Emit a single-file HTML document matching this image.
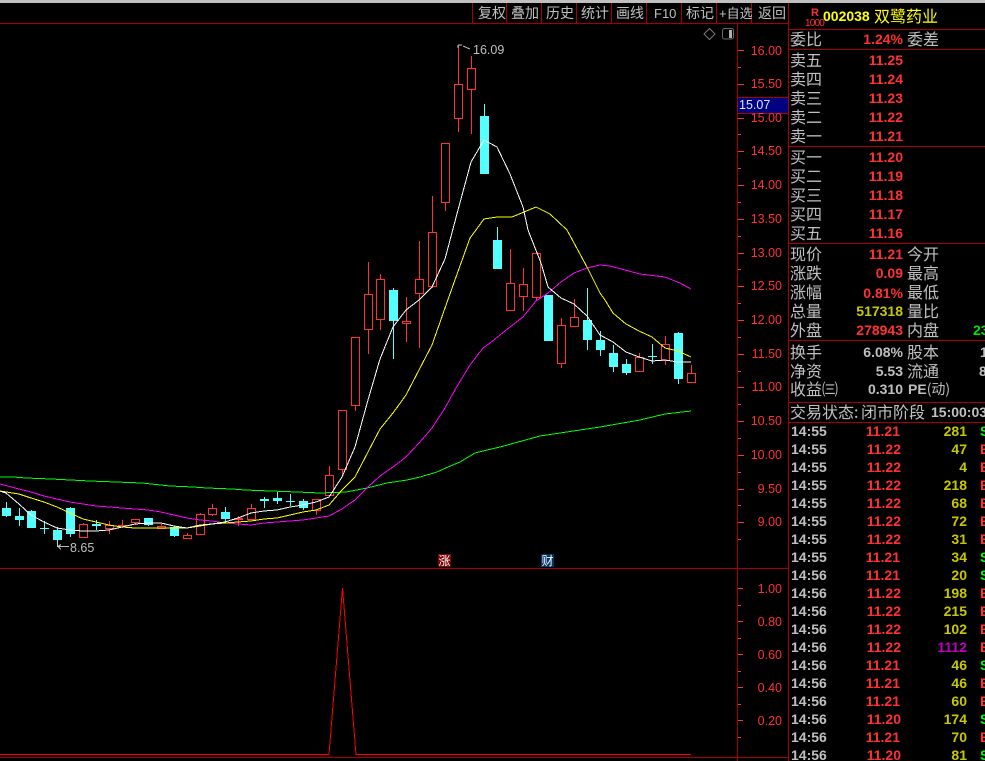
<!DOCTYPE html>
<html><head><meta charset="utf-8"><style>
html,body{margin:0;padding:0;background:#000;width:985px;height:761px;overflow:hidden}
svg{display:block}
text{font-family:"Liberation Sans","WenQuanYi Zen Hei",sans-serif;white-space:pre}
.c{font-size:16px;fill:#c0c0c0;font-family:"WenQuanYi Zen Hei","Noto Sans CJK SC",sans-serif}
.t{font-size:14px;fill:#c0c0c0;font-family:"WenQuanYi Zen Hei","Noto Sans CJK SC",sans-serif}
.b{font-size:14px;font-weight:bold;fill:#ff3232;text-anchor:end}
.y{fill:#c8c800}.g{fill:#c0c0c0}.n{fill:#00e600}
.a{font-size:12.5px;fill:#ff3232;text-anchor:end}
.l{font-size:12.5px;fill:#c0c0c0}
.tm{font-size:14px;font-weight:bold;fill:#c0c0c0}
.p{font-size:14px;font-weight:bold;fill:#ff3232;text-anchor:end}
.v{font-size:14px;font-weight:bold;fill:#c8c800;text-anchor:end}
.s{font-size:14px;font-weight:bold}
</style></head><body>
<svg width="985" height="761" viewBox="0 0 985 761" xmlns="http://www.w3.org/2000/svg">
<rect width="985" height="761" fill="#000"/>
<rect width="985" height="3" fill="#c0c0c0"/>
<g shape-rendering="crispEdges">
<path fill="none" stroke="#ff3232" d="M83.500 523V525M109.500 521V534M122.500 520V528M118 525.500h9M135.500 523V525M161.500 524V527M187.500 533V536M200.500 513V515M212.500 504V516M238.500 516V526M251.500 504V509M316.500 511V515M329.500 466V476M342.500 470V475M355.500 406V411M368.500 262V354M380.500 274V330M406.500 297V342M419.500 241V348M432.500 196V288M445.500 203V211M458.500 45V132M471.500 56V134M510.500 249V284M523.500 268V311M536.500 298V301M561.500 318V368M574.500 299V318M639.500 353V358M665.500 336V365M691.500 365V374"/>
<path fill="#000" stroke="#ff3232" d="M79.500 524.500h8v13h-8zM105.500 525.500h8v3h-8zM131.500 519.500h8v3h-8zM157.500 526.500h8v2h-8zM183.500 535.500h8v3h-8zM196.500 514.500h8v20h-8zM208.500 508.500h8v6h-8zM234.500 518.500h8v1h-8zM247.500 508.500h8v11h-8zM312.500 499.500h8v11h-8zM325.500 475.500h8v20h-8zM338.500 410.500h8v59h-8zM351.500 337.500h8v68h-8zM364.500 294.500h8v35h-8zM376.500 279.500h8v40h-8zM402.500 321.500h8v2h-8zM415.500 279.500h8v14h-8zM428.500 232.500h8v54h-8zM441.500 143.500h8v59h-8zM454.500 84.500h8v34h-8zM467.500 68.500h8v21h-8zM506.500 283.500h8v27h-8zM519.500 284.500h8v12h-8zM532.500 253.500h8v44h-8zM557.500 325.500h8v38h-8zM570.500 317.500h8v9h-8zM635.500 357.500h8v14h-8zM661.500 344.500h8v16h-8zM687.500 373.500h8v9h-8z"/>
<path fill="none" stroke="#54ffff" d="M6.500 502V517M19.500 508V526M31.500 510V528M44.500 521V534M57.500 527V547M70.500 507V537M96.500 520V530M148.500 518V526M174.500 526V537M225.500 507V522M264.500 497V508M277.500 492V504M290.500 494V506M303.500 499V510M393.500 288V359M484.500 104V174M497.500 227V269M587.500 288V350M600.500 331V356M613.500 345V372M626.500 359V375M652.500 344V364M678.500 332V384"/>
<path fill="#54ffff" d="M2 508h9v8h-9zM15 516h9v4h-9zM27 511h9v17h-9zM40 528h9v1h-9zM53 530h9v10h-9zM66 508h9v26h-9zM92 524h9v2h-9zM144 518h9v7h-9zM170 527h9v9h-9zM221 512h9v7h-9zM260 499h9v2h-9zM273 498h9v3h-9zM286 501h9v1h-9zM299 501h9v7h-9zM389 290h9v31h-9zM480 116h9v58h-9zM493 240h9v29h-9zM544 295h9v46h-9zM583 320h9v20h-9zM596 340h9v10h-9zM609 353h9v14h-9zM622 364h9v9h-9zM648 356h9v1h-9zM674 333h9v46h-9z"/>
<polyline fill="none" stroke="#00ff00" points="0,477 13,477 26,478 51,479 90,481 116,482 142,483 170,486 193,487 207,488 232,489 245,490 271,491 297,492 320,493 346,492 367,488 387,483 407,480 420,477 437,472 448,467 460,462 475,453 487,450 500,447 540,436 600,427 640,420 665,414 691,411"/>
<polyline fill="none" stroke="#ff00ff" points="0,484 19,489 31,492 44,496 57,499 70,502 83,504 96,506 109,507 122,508 135,509 148,510 161,512 174,515 187,518 200,520 212,521 225,523 238,524 251,525 264,523 277,522 290,521 303,520 316,518 329,516 342,509 349,504 355,500 368,487 380,476 393,467 406,457 419,443 432,428 445,408 456,388 470,365 483,348 490,343 510,327 523,317 536,301 548,293 561,282 574,273 587,268 600,265 610,266 640,274 665,277 680,283 691,289"/>
<polyline fill="none" stroke="#ffff00" points="0,491 19,494 31,498 44,502 57,507 70,513 83,519 96,522 109,525 122,527 135,528 148,528 161,528 174,528 187,528 200,526 212,524 225,523 238,522 251,521 264,519 277,518 290,515 303,512 316,510 329,505 342,490 355,477 368,452 380,429 393,413 406,395 419,370 432,345 445,308 456,277 470,238 476,230 484,219 497,217 512,217 536,207 550,214 567,230 587,267 600,293 605,300 613,313 626,324 639,331 652,337 665,348 678,351 691,357"/>
<polyline fill="none" stroke="#ffffff" points="0,491 6,493 19,504 31,515 44,522 57,528 70,530 83,531 96,531 109,530 122,527 135,524 148,523 161,523 174,526 187,528 200,525 212,524 225,522 238,518 251,513 264,511 277,510 290,507 303,505 316,502 329,497 342,477 355,447 368,400 380,359 393,327 406,310 419,300 432,287 445,259 458,210 471,162 484,140 497,147 510,174 523,207 528,230 541,263 548,287 561,298 574,304 587,316 600,335 613,342 626,352 639,357 652,361 665,360 678,362 691,362"/>
<path fill="none" stroke="#ff0000" d="M0 754.500H329L342.500 588L356 754.500H691"/>
<path fill="none" stroke="#a80000" d="M0 23.500H788M472.500 3V23M506.500 3V23M541.500 3V23M576.500 3V23M611.500 3V23M646.500 3V23M681.500 3V23M716.500 3V23M751.500 3V23M737.500 23V761M788.500 3V761M0 568.500H788M0 757.500H788M788 29.500H985M788 49.500H985M788 146.500H985M788 243.500H985M788 340.500H985M788 402.500H985M788 422.500H985M737 97.500H788M737 113.500H788"/>
<path fill="none" stroke="#ff3232" d="M738 50.500h6M738 67.500h3M738 84.500h6M738 101.500h3M738 118.500h6M738 134.500h3M738 151.500h6M738 168.500h3M738 185.500h6M738 202.500h3M738 219.500h6M738 236.500h3M738 253.500h6M738 269.500h3M738 286.500h6M738 303.500h3M738 320.500h6M738 337.500h3M738 354.500h6M738 371.500h3M738 387.500h6M738 404.500h3M738 421.500h6M738 438.500h3M738 455.500h6M738 472.500h3M738 489.500h6M738 505.500h3M738 522.500h6M738 539.500h3"/>
<path fill="none" stroke="#ff3232" d="M738 588.500h5M738 605.500h3M738 621.500h5M738 638.500h3M738 654.500h5M738 671.500h3M738 687.500h5M738 704.500h3M738 720.500h5M738 737.500h3"/>
<rect x="738" y="98" width="50" height="15" fill="#000080"/>
<rect x="438" y="554" width="13" height="13" fill="#800000"/>
<rect x="541" y="554" width="13" height="13" fill="#003366"/>
<path fill="none" stroke="#c0c0c0" d="M458 45h4M470 49L463 46M458 45v3M58 546.500H69M58 546.500l3-2M58 546.500l3 3"/>
</g>
<path fill="none" stroke="#7a7a7a" d="M709.500 28.500L715 34L709.500 39.500L704 34Z"/>
<rect x="722.500" y="28.500" width="11" height="10.500" rx="2" fill="none" stroke="#6a6a6a"/>
<rect x="729" y="30" width="3" height="8" fill="#b0b0b0"/>

<text class="t" x="478" y="18">复权</text><text class="t" x="511" y="18">叠加</text><text class="t" x="546" y="18">历史</text><text class="t" x="581" y="18">统计</text><text class="t" x="616" y="18">画线</text><text x="654" y="18" style="font-size:13px;fill:#c0c0c0">F10</text><text class="t" x="686" y="18">标记</text><text x="719" y="18" style="font-size:13px;fill:#c0c0c0">+自选</text><text class="t" x="758" y="18">返回</text>

<text class="a" x="782" y="55">16.00</text><text class="a" x="782" y="88">15.50</text><text class="a" x="782" y="122">15.00</text><text class="a" x="782" y="155">14.50</text><text class="a" x="782" y="189">14.00</text><text class="a" x="782" y="223">13.50</text><text class="a" x="782" y="257">13.00</text><text class="a" x="782" y="290">12.50</text><text class="a" x="782" y="324">12.00</text><text class="a" x="782" y="358">11.50</text><text class="a" x="782" y="391">11.00</text><text class="a" x="782" y="425">10.50</text><text class="a" x="782" y="459">10.00</text><text class="a" x="782" y="493">9.50</text><text class="a" x="782" y="526">9.00</text>
<text class="a" x="782" y="593">1.00</text><text class="a" x="782" y="626">0.80</text><text class="a" x="782" y="659">0.60</text><text class="a" x="782" y="692">0.40</text><text class="a" x="782" y="725">0.20</text>
<text x="739" y="109" style="font-size:12.5px;fill:#d8e8ff">15.07</text>
<text class="l" x="473" y="54">16.09</text><text class="l" x="70" y="552">8.65</text>
<text x="438.500" y="565" style="font-size:12px;fill:#fff;font-family:'WenQuanYi Zen Hei','Noto Sans CJK SC',sans-serif">涨</text>
<text x="541.500" y="565" style="font-size:12px;fill:#fff;font-family:'WenQuanYi Zen Hei','Noto Sans CJK SC',sans-serif">财</text>

<text x="811" y="16" style="font-size:11px;font-weight:bold;fill:#ff3232">R</text>
<text x="805" y="26" style="font-size:10px;fill:#ff3232;letter-spacing:-.8px">1000</text>
<text x="823" y="21" style="font-size:14px;font-weight:bold;fill:#ffff00">002038</text>
<text x="874" y="22" style="font-size:16px;fill:#ffff00;font-family:'WenQuanYi Zen Hei','Noto Sans CJK SC',sans-serif">双鹭药业</text>

<text class="c" x="790" y="45">委比</text><text class="b" x="903" y="44">1.24%</text><text class="c" x="907" y="45">委差</text>
<text class="c" x="790" y="66">卖五</text><text class="b" x="903" y="65">11.25</text>
<text class="c" x="790" y="85">卖四</text><text class="b" x="903" y="84">11.24</text>
<text class="c" x="790" y="104">卖三</text><text class="b" x="903" y="103">11.23</text>
<text class="c" x="790" y="123">卖二</text><text class="b" x="903" y="122">11.22</text>
<text class="c" x="790" y="142">卖一</text><text class="b" x="903" y="141">11.21</text>
<text class="c" x="790" y="163">买一</text><text class="b" x="903" y="162">11.20</text>
<text class="c" x="790" y="182">买二</text><text class="b" x="903" y="181">11.19</text>
<text class="c" x="790" y="201">买三</text><text class="b" x="903" y="200">11.18</text>
<text class="c" x="790" y="220">买四</text><text class="b" x="903" y="219">11.17</text>
<text class="c" x="790" y="239">买五</text><text class="b" x="903" y="238">11.16</text>
<text class="c" x="790" y="260">现价</text><text class="b" x="903" y="259">11.21</text><text class="c" x="907" y="260">今开</text>
<text class="c" x="790" y="279">涨跌</text><text class="b" x="903" y="278">0.09</text><text class="c" x="907" y="279">最高</text>
<text class="c" x="790" y="298">涨幅</text><text class="b" x="903" y="298">0.81%</text><text class="c" x="907" y="298">最低</text>
<text class="c" x="790" y="317">总量</text><text class="b y" x="903" y="316">517318</text><text class="c" x="907" y="317">量比</text>
<text class="c" x="790" y="336">外盘</text><text class="b" x="903" y="335">278943</text><text class="c" x="907" y="336">内盘</text><text class="b n" x="973" y="335" style="text-anchor:start">23</text>
<text class="c" x="790" y="358">换手</text><text class="b g" x="903" y="357">6.08%</text><text class="c" x="907" y="358">股本</text><text class="b g" x="980" y="357" style="text-anchor:start">1</text>
<text class="c" x="790" y="377">净资</text><text class="b g" x="903" y="376">5.53</text><text class="c" x="907" y="377">流通</text><text class="b g" x="979" y="376" style="text-anchor:start">8</text>
<text class="c" x="790" y="395">收益㈢</text><text class="b g" x="903" y="394">0.310</text><text class="b g" x="908" y="394" style="text-anchor:start">PE<tspan style="font-weight:normal;font-family:'WenQuanYi Zen Hei','Noto Sans CJK SC',sans-serif">(动)</tspan></text>
<text class="c" x="790" y="418">交易状态:</text><text class="c" x="861" y="418">闭市阶段</text><text class="tm" x="931" y="417">15:00:03</text>

<text class="tm" x="791" y="436">14:55</text><text class="p" x="900" y="436">11.21</text><text class="v" x="967" y="436">281</text><text class="s" x="980" y="436" fill="#00ff00">S</text>
<text class="tm" x="791" y="454">14:55</text><text class="p" x="901" y="454">11.22</text><text class="v" x="967" y="454">47</text><text class="s" x="980" y="454" fill="#ff3232">B</text>
<text class="tm" x="791" y="472">14:55</text><text class="p" x="901" y="472">11.22</text><text class="v" x="967" y="472">4</text><text class="s" x="980" y="472" fill="#ff3232">B</text>
<text class="tm" x="791" y="490">14:55</text><text class="p" x="901" y="490">11.22</text><text class="v" x="967" y="490">218</text><text class="s" x="980" y="490" fill="#ff3232">B</text>
<text class="tm" x="791" y="508">14:55</text><text class="p" x="901" y="508">11.22</text><text class="v" x="967" y="508">68</text><text class="s" x="980" y="508" fill="#ff3232">B</text>
<text class="tm" x="791" y="526">14:55</text><text class="p" x="901" y="526">11.22</text><text class="v" x="967" y="526">72</text><text class="s" x="980" y="526" fill="#ff3232">B</text>
<text class="tm" x="791" y="544">14:55</text><text class="p" x="901" y="544">11.22</text><text class="v" x="967" y="544">31</text><text class="s" x="980" y="544" fill="#ff3232">B</text>
<text class="tm" x="791" y="562">14:55</text><text class="p" x="900" y="562">11.21</text><text class="v" x="967" y="562">34</text><text class="s" x="980" y="562" fill="#00ff00">S</text>
<text class="tm" x="791" y="580">14:56</text><text class="p" x="900" y="580">11.21</text><text class="v" x="967" y="580">20</text><text class="s" x="980" y="580" fill="#00ff00">S</text>
<text class="tm" x="791" y="598">14:56</text><text class="p" x="901" y="598">11.22</text><text class="v" x="967" y="598">198</text><text class="s" x="980" y="598" fill="#ff3232">B</text>
<text class="tm" x="791" y="616">14:56</text><text class="p" x="901" y="616">11.22</text><text class="v" x="967" y="616">215</text><text class="s" x="980" y="616" fill="#ff3232">B</text>
<text class="tm" x="791" y="634">14:56</text><text class="p" x="901" y="634">11.22</text><text class="v" x="967" y="634">102</text><text class="s" x="980" y="634" fill="#ff3232">B</text>
<text class="tm" x="791" y="652">14:56</text><text class="p" x="901" y="652">11.22</text><text class="v" x="967" y="652" style="fill:#c000c0">1112</text><text class="s" x="980" y="652" fill="#ff3232">B</text>
<text class="tm" x="791" y="670">14:56</text><text class="p" x="900" y="670">11.21</text><text class="v" x="967" y="670">46</text><text class="s" x="980" y="670" fill="#00ff00">S</text>
<text class="tm" x="791" y="688">14:56</text><text class="p" x="900" y="688">11.21</text><text class="v" x="967" y="688">46</text><text class="s" x="980" y="688" fill="#ff3232">B</text>
<text class="tm" x="791" y="706">14:56</text><text class="p" x="900" y="706">11.21</text><text class="v" x="967" y="706">60</text><text class="s" x="980" y="706" fill="#ff3232">B</text>
<text class="tm" x="791" y="724">14:56</text><text class="p" x="901" y="724">11.20</text><text class="v" x="967" y="724">174</text><text class="s" x="980" y="724" fill="#00ff00">S</text>
<text class="tm" x="791" y="742">14:56</text><text class="p" x="900" y="742">11.21</text><text class="v" x="967" y="742">70</text><text class="s" x="980" y="742" fill="#ff3232">B</text>
<text class="tm" x="791" y="760">14:56</text><text class="p" x="901" y="760">11.20</text><text class="v" x="967" y="760">81</text><text class="s" x="980" y="760" fill="#00ff00">S</text>
</svg>
</body></html>
